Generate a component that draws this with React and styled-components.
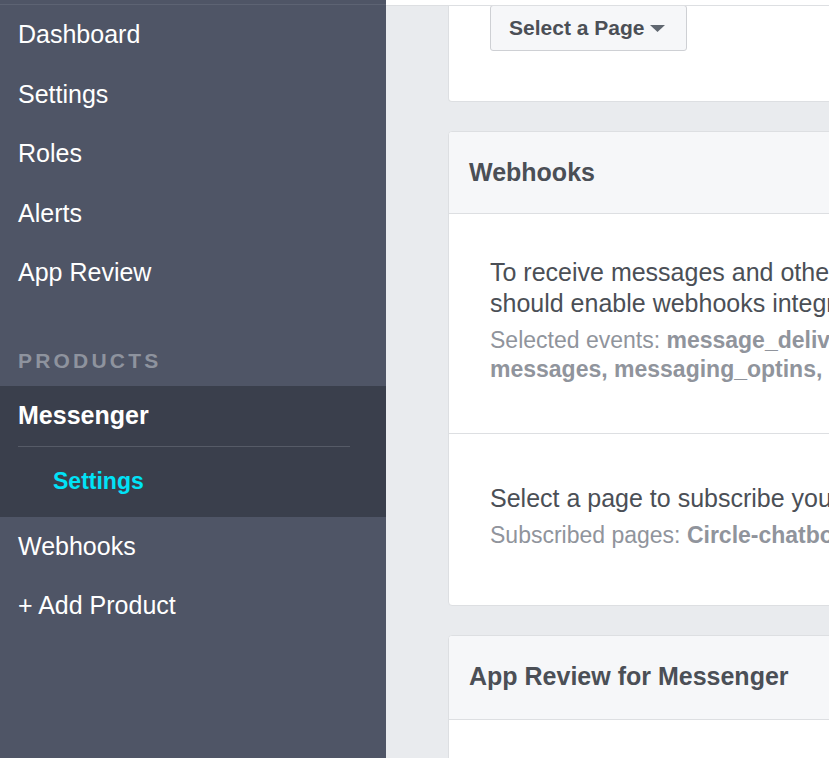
import React from 'react';
import styled, {createGlobalStyle} from 'styled-components';

const GlobalStyle = createGlobalStyle`
  html, body {
    margin: 0;
    padding: 0;
  }
  body {
    font-family: "Liberation Sans", Arial, Helvetica, sans-serif;
    background: #e9ebee;
  }
  * {
    box-sizing: border-box;
  }
`;

const navTop = ['Dashboard', 'Settings', 'Roles', 'Alerts', 'App Review'];

const App = () => {
  return (
    <Page>
      <GlobalStyle/>
      <Sidebar>
        <NavList>
          {navTop.map(label => <NavItem key={label}>{label}</NavItem>)}
          <SectionLabel>PRODUCTS</SectionLabel>
          <ActiveGroup>
            <NavItem bold>Messenger</NavItem>
            <GroupDivider/>
            <SubItem>Settings</SubItem>
          </ActiveGroup>
          <NavItem>Webhooks</NavItem>
          <NavItem>+ Add Product</NavItem>
        </NavList>
      </Sidebar>

      <Main>
        <TopStrip/>
        <Content>
          <Card cutTop>
            <CardBody>
              <SelectButton>
                Select a Page
                <Caret viewBox="0 0 15 7" width="15" height="7">
                  <path d="M0 0 L15 0 L7.5 7 Z" fill="#606770"/>
                </Caret>
              </SelectButton>
            </CardBody>
          </Card>

          <Card>
            <CardHeader>Webhooks</CardHeader>
            <Section top={42.5} bottom={49.5} divided>
              <BodyText>To receive messages and other events sent by Messenger users, the app</BodyText>
              <BodyText>should enable webhooks integration.</BodyText>
              <MetaText>
                <span>Selected events: </span>
                <strong>message_deliveries, message_reads, messaging_postbacks,</strong>
              </MetaText>
              <MetaText>
                <strong>messages, messaging_optins, messaging_referrals</strong>
              </MetaText>
            </Section>
            <Section top={48.5} bottom={55.5}>
              <BodyText>Select a page to subscribe your webhook to the page events</BodyText>
              <MetaText>
                <span>Subscribed pages: </span>
                <strong>Circle-chatbot</strong>
              </MetaText>
            </Section>
          </Card>

          <Card>
            <CardHeader tall>App Review for Messenger</CardHeader>
            <Section top={40} bottom={40}>
              <BodyText>&nbsp;</BodyText>
            </Section>
          </Card>
        </Content>
      </Main>
    </Page>
  );
};

export default App;

const Page = styled.div`
  display: flex;
  width: 100%;
  height: 100vh;
  overflow: hidden;
`;

const Sidebar = styled.aside`
  flex: 0 0 386px;
  background: #4f5566;
  padding-top: 4px;
`;

const NavList = styled.nav`
  display: flex;
  flex-direction: column;
  border-top: 1px solid #5d6373;
`;

const NavItem = styled.div`
  height: 59.5px;
  display: flex;
  align-items: center;
  padding-left: 18px;
  font-size: 25px;
  font-weight: ${props => props.bold ? 700 : 400};
  color: #ffffff;
  white-space: nowrap;
`;

const SectionLabel = styled.div`
  padding: 46.5px 0 13px 18px;
  line-height: 24px;
  font-size: 21px;
  font-weight: 700;
  letter-spacing: 3.2px;
  color: #8e939e;
`;

const ActiveGroup = styled.div`
  background: #3a3f4c;
  display: flex;
  flex-direction: column;
`;

const GroupDivider = styled.div`
  height: 1px;
  margin: 0 36px 0 18px;
  background: #565b67;
`;

const SubItem = styled.div`
  height: 70px;
  display: flex;
  align-items: center;
  padding-left: 53px;
  font-size: 23px;
  font-weight: 700;
  color: #00e3f7;
`;

const Main = styled.main`
  flex: 1;
  min-width: 0;
  background: #e9ebee;
  overflow: hidden;
  display: flex;
  flex-direction: column;
`;

const TopStrip = styled.div`
  height: 6px;
  background: #ffffff;
  border-bottom: 1px solid #dddfe2;
  flex-shrink: 0;
`;

const Content = styled.div`
  display: flex;
  flex-direction: column;
  gap: 29px;
  padding-left: 62px;
`;

const Card = styled.section`
  width: 760px;
  flex-shrink: 0;
  background: #ffffff;
  border: 1px solid #dddfe2;
  border-top: ${props => props.cutTop ? 'none' : '1px solid #dddfe2'};
  border-radius: ${props => props.cutTop ? '0 0 4px 4px' : '4px'};
  overflow: hidden;
`;

const CardBody = styled.div`
  padding: 0 0 50px 41px;
`;

const SelectButton = styled.button`
  display: flex;
  align-items: center;
  gap: 6px;
  height: 46px;
  margin-top: -1px;
  padding: 0 21px 0 18px;
  background: #f6f7f9;
  border: 1px solid #ced0d4;
  border-radius: 3px;
  font-family: "Liberation Sans", Arial, sans-serif;
  font-size: 21px;
  font-weight: 700;
  color: #4b4f56;
`;

const Caret = styled.svg`
  display: block;
  margin-top: 1px;
`;

const CardHeader = styled.header`
  height: ${props => props.tall ? 84 : 82}px;
  padding-bottom: ${props => props.tall ? 2 : 0}px;
  display: flex;
  align-items: center;
  padding-left: 20px;
  background: #f6f7f9;
  border-bottom: 1px solid #dddfe2;
  font-size: 25px;
  font-weight: 700;
  color: #4b4f56;
`;

const Section = styled.div`
  padding: ${props => props.top}px 0 ${props => props.bottom}px 41px;
  border-bottom: ${props => props.divided ? '1px solid #dddfe2' : 'none'};
`;

const BodyText = styled.p`
  margin: 0;
  font-size: 25px;
  line-height: 31px;
  color: #4b4f56;
  white-space: nowrap;

  & + p[data-meta] {
    margin-top: 7px;
  }
`;

const MetaText = styled.p.attrs({'data-meta': true})`
  margin: 0;
  font-size: 23px;
  line-height: 29px;
  color: #90949c;
  white-space: nowrap;

  strong {
    font-weight: 700;
  }
`;
